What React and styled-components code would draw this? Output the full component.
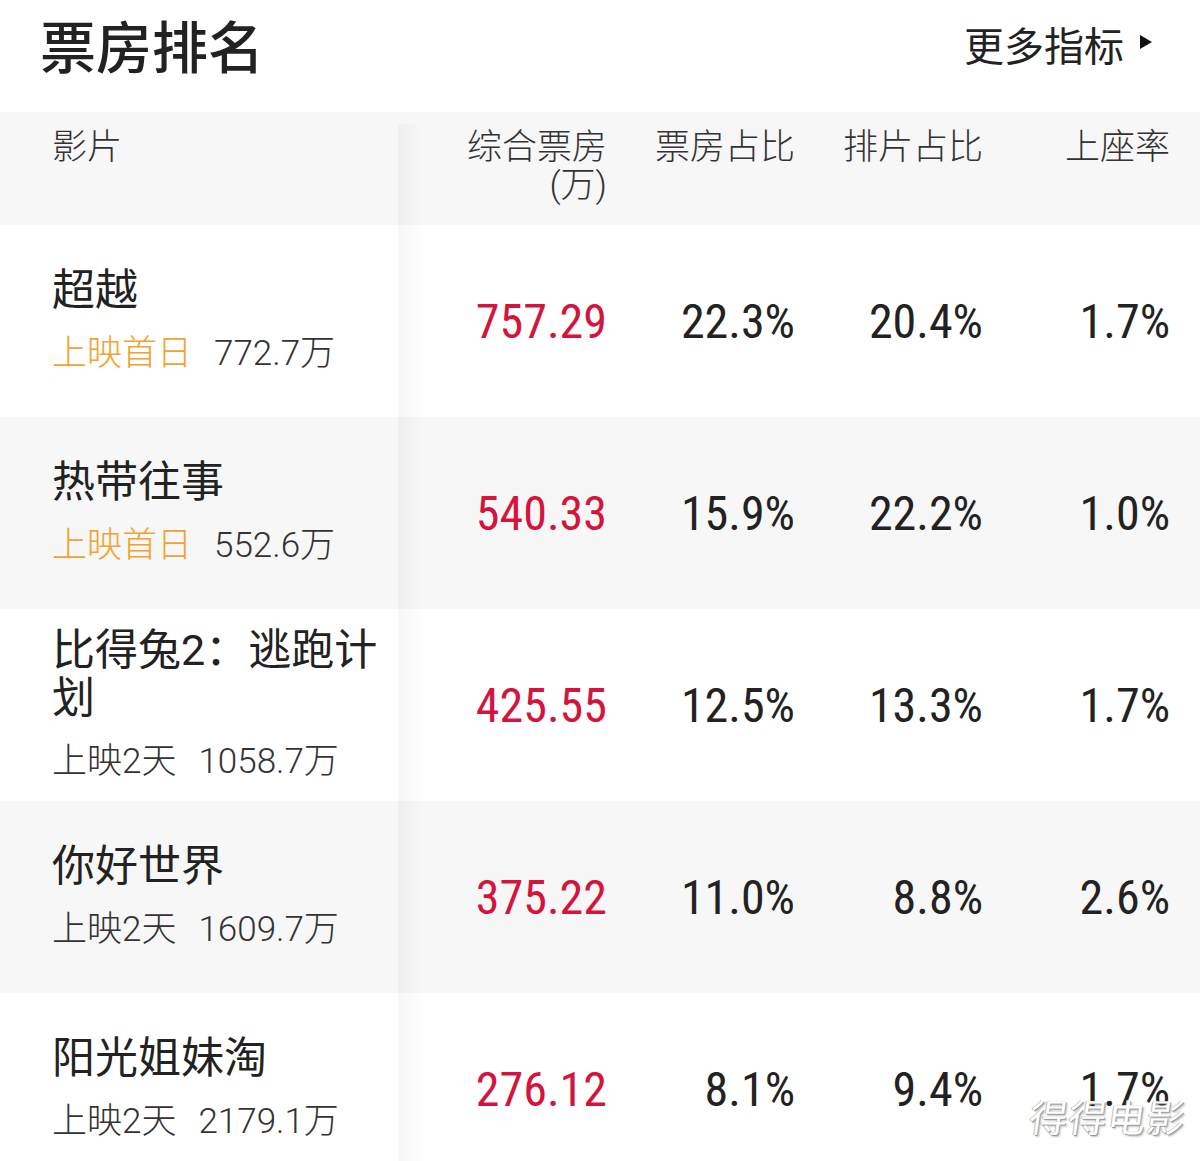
import React from "react";
import styled, { createGlobalStyle } from "styled-components";

const GlobalStyle = createGlobalStyle`
  body {
    margin: 0;
    background: #fff;
    font-family: Roboto, "Noto Sans CJK SC", sans-serif;
    color: #222;
  }
`;

const Page = styled.div`
  position: relative;
  width: 1200px;
  background: #fff;
`;

const TopBar = styled.div`
  height: 88px;
  margin-bottom: 24px;
  display: flex;
  align-items: center;
  justify-content: space-between;
  padding: 0 48px 0 40px;
`;

const Title = styled.h1`
  margin: 0;
  font-family: "Noto Sans CJK SC", sans-serif;
  font-size: 56px;
  font-weight: 500;
  line-height: 1;
  color: #222;
`;

const MoreLink = styled.div`
  display: flex;
  align-items: center;
  gap: 16px;
  font-family: "Noto Sans CJK SC", sans-serif;
  font-size: 40px;
  font-weight: 400;
  color: #222;
`;

const Arrow = styled.span`
  width: 0;
  height: 0;
  border-top: 7px solid transparent;
  border-bottom: 7px solid transparent;
  border-left: 12px solid #111;
  margin-top: -4px;
`;

const cols = "398px 209px 188px 188px 187px";

const HeaderRow = styled.div`
  display: grid;
  grid-template-columns: ${cols};
  padding-right: 30px;
  height: 113px;
  background: #f7f7f7;
`;

const HeadCell = styled.div`
  position: relative;
  padding-top: 17px;
  padding-left: ${({ $first }) => ($first ? "52px" : "0")};
  text-align: ${({ $first }) => ($first ? "left" : "right")};
  font-family: Roboto, "Noto Sans CJK SC", sans-serif;
  font-size: 35px;
  font-weight: 300;
  line-height: 38px;
  color: #333;

  &::after {
    content: "";
    display: ${({ $first }) => ($first ? "block" : "none")};
    position: absolute;
    top: 12px;
    bottom: 0;
    right: -26px;
    width: 26px;
    background: linear-gradient(90deg, rgba(0, 0, 0, 0.03), rgba(0, 0, 0, 0));
    pointer-events: none;
  }
`;

const Unit = styled.span`
  display: block;
`;

const Row = styled.div`
  display: grid;
  grid-template-columns: ${cols};
  padding-right: 30px;
  height: 192px;
  align-items: center;
  background: ${({ $alt }) => ($alt ? "#f7f7f7" : "#fff")};
`;

const NameCell = styled.div`
  position: relative;
  align-self: stretch;
  display: flex;
  flex-direction: column;
  justify-content: center;
  padding: 0 10px 0 52px;

  &::after {
    content: "";
    position: absolute;
    top: 0;
    bottom: 0;
    right: -26px;
    width: 26px;
    background: linear-gradient(90deg, rgba(0, 0, 0, 0.035), rgba(0, 0, 0, 0));
    pointer-events: none;
  }
`;

const FilmName = styled.div`
  font-family: Roboto, "Noto Sans CJK SC", sans-serif;
  font-size: 43px;
  font-weight: 400;
  line-height: 48px;
  color: #222;
`;

const SubLine = styled.div`
  margin-top: 18px;
  font-family: Roboto, "Noto Sans CJK SC", sans-serif;
  font-size: 35px;
  font-weight: 300;
  line-height: 44px;
  color: #333;
  white-space: nowrap;
`;

const Release = styled.span`
  margin-right: 22px;
  color: ${({ $first }) => ($first ? "#f2a230" : "#333")};
`;

const NumCell = styled.div`
  text-align: right;
  font-family: "Liberation Sans Narrow", "Roboto Condensed", Roboto, sans-serif;
  font-size: 48px;
  font-weight: 400;
  color: ${({ $red }) => ($red ? "#d4143c" : "#222")};
`;

const Watermark = styled.div`
  position: absolute;
  top: 1088px;
  right: 14px;
  font-family: "Noto Sans CJK SC", sans-serif;
  font-size: 38px;
  font-weight: 400;
  color: #fff;
  transform: skewX(-8deg);
  text-shadow: 1px 1px 0 #999, -1px 0 0 #bbb, 2px 2px 2px rgba(0, 0, 0, 0.25);
  letter-spacing: 1px;
`;

const films = [
  { name: "超越", days: "上映首日", total: "772.7万", box: "757.29", share: "22.3%", show: "20.4%", seat: "1.7%" },
  { name: "热带往事", days: "上映首日", total: "552.6万", box: "540.33", share: "15.9%", show: "22.2%", seat: "1.0%" },
  { name: "比得兔2：逃跑计划", days: "上映2天", total: "1058.7万", box: "425.55", share: "12.5%", show: "13.3%", seat: "1.7%" },
  { name: "你好世界", days: "上映2天", total: "1609.7万", box: "375.22", share: "11.0%", show: "8.8%", seat: "2.6%" },
  { name: "阳光姐妹淘", days: "上映2天", total: "2179.1万", box: "276.12", share: "8.1%", show: "9.4%", seat: "1.7%" },
];

export default function App() {
  return (
    <Page>
      <GlobalStyle />
      <TopBar>
        <Title>票房排名</Title>
        <MoreLink>
          更多指标
          <Arrow />
        </MoreLink>
      </TopBar>

      <HeaderRow>
        <HeadCell $first>影片</HeadCell>
        <HeadCell>
          综合票房
          <Unit>(万)</Unit>
        </HeadCell>
        <HeadCell>票房占比</HeadCell>
        <HeadCell>排片占比</HeadCell>
        <HeadCell>上座率</HeadCell>
      </HeaderRow>

      {films.map((f, i) => (
        <Row key={f.name} $alt={i % 2 === 1}>
          <NameCell>
            <FilmName>{f.name}</FilmName>
            <SubLine>
              <Release $first={f.days === "上映首日"}>{f.days}</Release>
              {f.total}
            </SubLine>
          </NameCell>
          <NumCell $red>{f.box}</NumCell>
          <NumCell>{f.share}</NumCell>
          <NumCell>{f.show}</NumCell>
          <NumCell>{f.seat}</NumCell>
        </Row>
      ))}

      <Watermark>得得电影</Watermark>
    </Page>
  );
}
